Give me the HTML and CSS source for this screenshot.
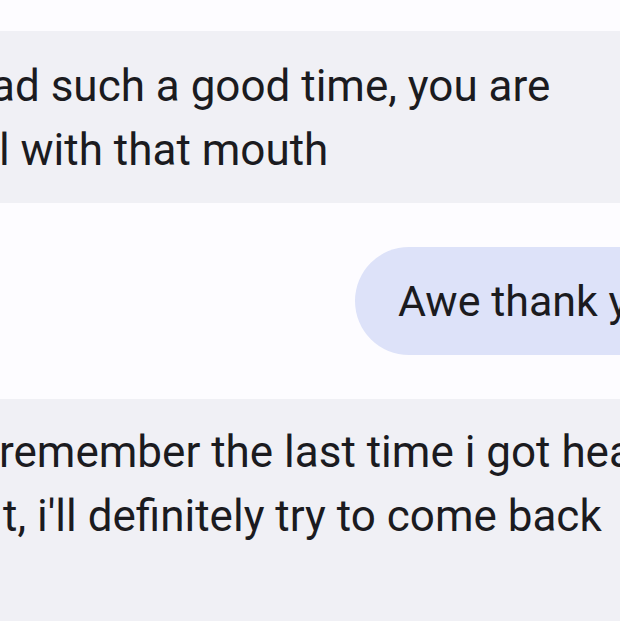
FILE: index.html
```html
<!DOCTYPE html>
<html lang="en">
    <head>
        <meta charset="utf-8">
        <title>Messages</title>
        <meta name="viewport" content="width=device-width">
        <link rel="stylesheet" href="styles.css">
    </head>
    <body>
        <div class="thread">
            <div class="msg msg-in">
                <span class="line line-a">ad such a good time, you are</span>
                <span class="line line-b">al with that mouth</span>
            </div>
            <div class="msg-row">
                <div class="bubble">Awe thank you so much</div>
            </div>
            <div class="msg msg-in msg-last">
                <span class="line line-c">remember the last time i got heard</span>
                <span class="line line-d">t, i'll definitely try to come back</span>
            </div>
        </div>
    </body>
</html>
```

FILE: styles.css
```css
html, body {
    margin: 0;
    padding: 0;
}

body {
    background-color: #FDFCFF;
    color: #1B1B1F;
    font-family: Roboto, "Noto Sans", sans-serif;
    font-size: 44px;
    line-height: 64px;
    height: 621px;
    overflow: hidden;
}

.thread {
    padding-top: 31px;
    display: flex;
    flex-direction: column;
    gap: 44px;
}

.msg {
    white-space: nowrap;
    overflow: hidden;
}

.msg-in {
    background-color: #F0F0F5;
    padding: 23px 0 21px;
}

.msg-last {
    padding-top: 21px;
    height: 240px;
}

.line {
    display: block;
}

.line-a {
    margin-left: -9px;
}

.line-b {
    margin-left: -25px;
}

.line-c {
    margin-left: -1px;
}

.line-d {
    margin-left: 3px;
}

.msg-row {
    display: flex;
    overflow: hidden;
}

.bubble {
    flex-shrink: 0;
    margin-left: 355px;
    background-color: #DDE2F9;
    border-radius: 54px;
    height: 108px;
    line-height: 108px;
    padding: 0 40px 0 43px;
    font-size: 43px;
    white-space: nowrap;
}
```
